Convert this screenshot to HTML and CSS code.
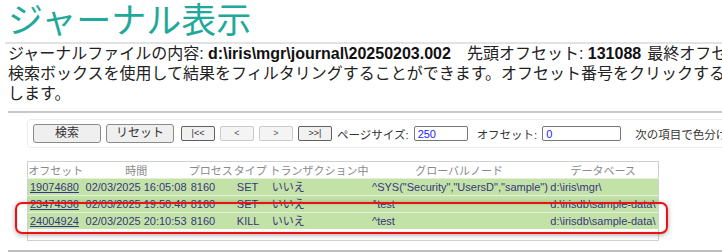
FILE: index.html
```html
<!DOCTYPE html>
<html lang="ja">
<head>
    <meta charset="UTF-8">
    <title>ジャーナル表示</title>
    <link rel="stylesheet" href="styles.css">
</head>
<body>

    <div class="page">
        <h1 class="title">ジャーナル表示</h1>
        <p class="info">
            <span class="line">ジャーナルファイルの内容: <b>d:\iris\mgr\journal\20250203.002</b><span class="gap"></span>先頭オフセット: <b>131088</b><span class="gap small"></span>最終オフセ</span>
            <span class="line">検索ボックスを使用して結果をフィルタリングすることができます。オフセット番号をクリックする</span>
            <span class="line">します。</span>
        </p>

        <div class="rule"></div>

        <div class="toolbar">
            <button class="btn">検索</button>
            <button class="btn">リセット</button>
            <button class="nav first">|&lt;&lt;</button>
            <button class="nav off">&lt;</button>
            <button class="nav off">&gt;</button>
            <button class="nav">&gt;&gt;|</button>
            <label class="lbl">ページサイズ:</label>
            <input type="text" class="field size" value="250">
            <label class="lbl wide">オフセット:</label>
            <input type="text" class="field offset" value="0">
            <label class="lbl far">次の項目で色分け:</label>
        </div>

        <table class="journal">
            <colgroup>
                <col class="c-offset">
                <col class="c-time">
                <col class="c-pid">
                <col class="c-type">
                <col class="c-trans">
                <col class="c-global">
                <col class="c-db">
            </colgroup>
            <thead>
                <tr>
                    <th>オフセット</th>
                    <th>時間</th>
                    <th>プロセス</th>
                    <th>タイプ</th>
                    <th>トランザクション中</th>
                    <th>グローバルノード</th>
                    <th>データベース</th>
                </tr>
            </thead>
            <tbody>
                <tr class="hit">
                    <td><a href="#">19074680</a></td>
                    <td>02/03/2025 16:05:08</td>
                    <td>8160</td>
                    <td class="type">SET</td>
                    <td class="trans">いいえ</td>
                    <td>^SYS("Security","UsersD","sample")</td>
                    <td>d:\iris\mgr\</td>
                </tr>
                <tr class="hit">
                    <td><a href="#">23474336</a></td>
                    <td>02/03/2025 19:50:46</td>
                    <td>8160</td>
                    <td class="type">SET</td>
                    <td class="trans">いいえ</td>
                    <td>^test</td>
                    <td>d:\irisdb\sample-data\</td>
                </tr>
                <tr class="hit">
                    <td><a href="#">24004924</a></td>
                    <td>02/03/2025 20:10:53</td>
                    <td>8160</td>
                    <td class="type">KILL</td>
                    <td class="trans">いいえ</td>
                    <td>^test</td>
                    <td>d:\irisdb\sample-data\</td>
                </tr>
                <tr class="blank">
                    <td colspan="7"></td>
                </tr>
            </tbody>
        </table>

        <div class="rule bottom"></div>

        <!-- annotation drawn over the last rows -->
        <div class="mark"></div>
    </div>

</body>
</html>
```

FILE: styles.css
```css
body {
    margin: 0;
    overflow: hidden;
    background: #fff;
    font-family: "Liberation Sans", "Noto Sans CJK JP", sans-serif;
    color: #222;
}
.page {
    position: relative;
    width: 722px;
    height: 252px;
    padding-left: 8px;
    box-sizing: border-box;
    overflow: hidden;
}
.title {
    margin: 0 0 0 -3px;
    padding-left: 3px;
    font-size: 35px;
    font-weight: normal;
    line-height: 42px;
    height: 42px;
    color: #1fa99b;
    border-bottom: 2px solid #e2e2e2;
    white-space: nowrap;
}
.info {
    margin: 0;
    font-size: 16px;
    line-height: 20px;
}
.info .line {
    display: block;
    white-space: nowrap;
}
.info b {
    font-weight: bold;
    color: #111;
}
.gap {
    display: inline-block;
    width: 16px;
}
.gap.small {
    width: 6px;
}
.rule {
    margin-top: 7px;
    border-top: 2px solid #c8c8c8;
}
.rule.bottom {
    margin-top: 9px;
    border-top: 2px solid #bdbdbd;
}
.toolbar {
    display: flex;
    align-items: center;
    margin: 6px 0 0 19px;
    width: 760px;
    height: 29px;
    padding-left: 5px;
    box-sizing: border-box;
    border: 1px solid #ececec;
    border-radius: 4px;
    white-space: nowrap;
    gap: 5px;
}
.btn {
    width: 68px;
    height: 19px;
    padding: 0;
    background: #efefef;
    border: 1px solid #8a8a8a;
    border-radius: 3px;
    font-family: inherit;
    font-size: 12px;
    line-height: 17px;
    color: #333;
}
.nav {
    width: 34px;
    height: 15px;
    padding: 0;
    background: #f1f1f1;
    border: 1px solid #606060;
    border-radius: 2px;
    font-family: inherit;
    font-size: 9px;
    line-height: 13px;
    color: #333;
}
.nav.first {
    margin-left: 2px;
}
.nav.off {
    border-color: #cacaca;
    background: #f4f4f4;
    color: #555;
}
.lbl {
    font-size: 11.5px;
    color: #333;
}
.lbl.wide {
    margin-left: 4px;
}
.lbl.far {
    margin-left: 9px;
}
.field {
    height: 15px;
    box-sizing: border-box;
    padding: 0 3px;
    border: 1px solid #767676;
    border-radius: 2px;
    font-family: inherit;
    font-size: 11px;
    color: #2222ff;
}
.field.size {
    width: 54px;
}
.field.offset {
    width: 79px;
}
.journal {
    margin: 13px 0 0 19px;
    width: 632px;
    table-layout: fixed;
    border-collapse: collapse;
    border: 1px solid #cfcfcf;
    font-size: 11px;
    color: #37377d;
}
.c-offset { width: 56px; }
.c-time { width: 105px; }
.c-pid { width: 44px; }
.c-type { width: 35px; }
.c-trans { width: 102px; }
.c-global { width: 178px; }
.c-db { width: 110px; }
.journal th {
    height: 16px;
    padding: 0;
    font-weight: normal;
    color: #8a8a8a;
    text-align: center;
    white-space: nowrap;
    overflow: hidden;
}
.journal td {
    height: 16px;
    padding: 0 0 0 2px;
    white-space: nowrap;
    overflow: hidden;
    line-height: 16px;
}
.journal tr.hit td {
    background: #c3e2a8;
    border-top: 1px solid #e3f0d8;
}
.journal td.type,
.journal td.trans {
    padding-left: 4px;
}
.journal a {
    color: #37377d;
}
.journal tr.blank td {
    height: 11px;
    background: #fff;
}
.mark {
    position: absolute;
    left: 15px;
    top: 202px;
    width: 653px;
    height: 32px;
    box-sizing: border-box;
    border: 2px solid #ee1111;
    border-radius: 7px;
    box-shadow: 0 1px 5px rgba(0, 0, 0, 0.35), inset 0 0 3px rgba(0, 0, 0, 0.15);
}
```
